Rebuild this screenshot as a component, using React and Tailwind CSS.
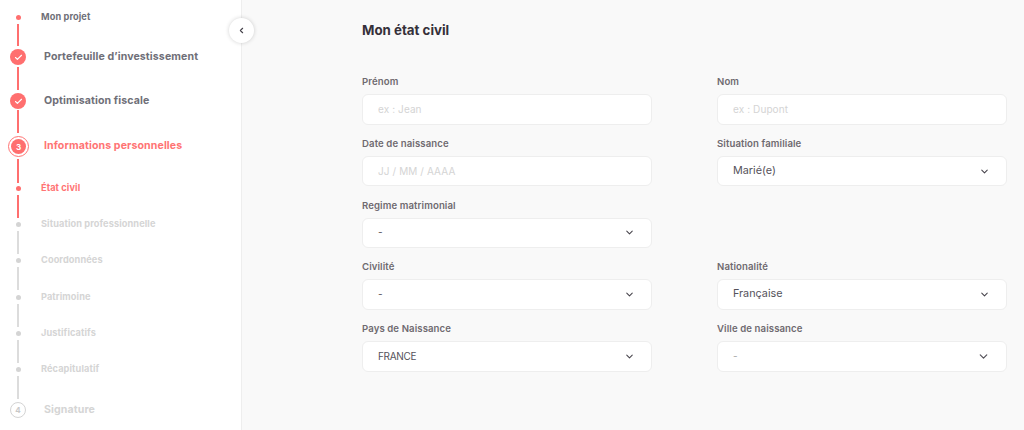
import { Check, ChevronDown, ChevronLeft } from 'lucide-react';

const FONT = "font-['Inter','Open_Sans',sans-serif]";

function Line({ on, top, bottom }) {
  return (
    <div
      className={`ml-[17px] w-[2px] ${on ? 'bg-[#ff6f6f]' : 'bg-[#dcdcdc]'}`}
      style={{ marginTop: top, height: bottom - top }}
    />
  );
}

function SubStep({ label, state = 'off' }) {
  const colors = {
    done: 'text-[#6f6f78]',
    active: 'text-[#ff7474]',
    off: 'text-[#d5d5d5]',
  };
  return (
    <div className="flex items-center h-[5px] ml-[16px]">
      <span className={`w-[5px] h-[5px] rounded-full ${state === 'off' ? 'bg-[#d4d4d4]' : 'bg-[#ff6f6f]'}`} />
      <span className={`ml-[20px] pb-[1px] text-[9.2px] font-bold whitespace-nowrap tracking-[0.1px] ${colors[state]}`}>{label}</span>
    </div>
  );
}

function Step({ label, state, num }) {
  const text = 'pb-[1px] text-[10.6px] font-bold whitespace-nowrap tracking-[0.1px]';
  if (state === 'active') {
    return (
      <div className="flex items-center h-[21px] ml-[8px]">
        <span className="w-[21px] h-[21px] rounded-full border border-[#ff7474] flex items-center justify-center">
          <span className="w-[15px] h-[15px] rounded-full bg-[#ff6f6f] text-white text-[8px] font-bold flex items-center justify-center">{num}</span>
        </span>
        <span className={`ml-[15px] text-[#ff7474] ${text}`}>{label}</span>
      </div>
    );
  }
  if (state === 'off') {
    return (
      <div className="flex items-center h-[16px] ml-[10px]">
        <span className="w-[16px] h-[16px] rounded-full border border-[#d4d4d4] text-[#c8c8c8] text-[8px] font-bold flex items-center justify-center">{num}</span>
        <span className={`ml-[18px] text-[#d5d5d5] ${text}`}>{label}</span>
      </div>
    );
  }
  return (
    <div className="flex items-center h-[16px] ml-[10px]">
      <span className="w-[16px] h-[16px] rounded-full bg-[#ff6f6f] flex items-center justify-center">
        <Check className="w-[9px] h-[9px] text-white" strokeWidth={3} />
      </span>
      <span className={`ml-[18px] text-[#6f6f78] ${text}`}>{label}</span>
    </div>
  );
}

function Field({ label, placeholder, value, select, muted, small, bigChevron }) {
  return (
    <div>
      <label className="block h-[16px] leading-[18px] mb-[5px] text-[9.6px] font-semibold text-[#6f6a70] tracking-[0.1px]">{label}</label>
      {select ? (
        <div className="h-[30.5px] bg-white rounded-[6px] border border-[#eeeeee] flex items-center justify-between pl-[15px] pr-[16px]">
          <span className={`${small ? 'text-[10px] tracking-[-0.3px]' : 'text-[10.8px]'} ${muted ? 'text-[#a8a8a8]' : 'text-[#55525a]'}`}>{value}</span>
          <ChevronDown className={bigChevron ? 'w-[13px] h-[13px] text-[#55525a]' : 'w-[11px] h-[11px] text-[#45424a]'} strokeWidth={2.25} />
        </div>
      ) : (
        <input
          placeholder={placeholder}
          className="block w-full h-[30.5px] bg-white rounded-[6px] border border-[#eeeeee] pl-[15px] text-[10px] tracking-[0.1px] placeholder:text-[#d4d4d4] outline-none"
        />
      )}
    </div>
  );
}

export default function App() {
  return (
    <div className={`relative flex w-[1024px] h-[430px] overflow-hidden bg-[#f9f9f9] ${FONT}`}>
      <aside className="w-[242px] h-full bg-white border-r border-[#eeeeee] pt-[15px] shrink-0">
        <SubStep label="Mon projet" state="done" />
        <Line on top={4} bottom={26} />
        <div className="mt-[3px]"><Step label="Portefeuille d’investissement" state="done" /></div>
        <Line on top={2} bottom={25} />
        <div className="mt-[3px]"><Step label="Optimisation fiscale" state="done" /></div>
        <Line on top={1} bottom={24} />
        <div className="mt-[3px]"><Step label="Informations personnelles" state="active" num="3" /></div>
        <Line on top={2} bottom={26} />
        <div className="mt-[3px]"><SubStep label="État civil" state="active" /></div>
        <Line on top={4} bottom={27} />
        <div className="mt-[4px]"><SubStep label="Situation professionnelle" /></div>
        <Line top={4} bottom={27} />
        <div className="mt-[4px]"><SubStep label="Coordonnées" /></div>
        <Line top={4} bottom={27} />
        <div className="mt-[5px]"><SubStep label="Patrimoine" /></div>
        <Line top={4} bottom={27} />
        <div className="mt-[4px]"><SubStep label="Justificatifs" /></div>
        <Line top={4} bottom={27} />
        <div className="mt-[4px]"><SubStep label="Récapitulatif" /></div>
        <Line top={4} bottom={27} />
        <div className="mt-[3px]"><Step label="Signature" state="off" num="4" /></div>
      </aside>

      {/* Collapse button */}
      <button className="absolute left-[229px] top-[18px] w-[25px] h-[25px] rounded-full bg-white shadow-[0_0_4px_rgba(0,0,0,0.18)] flex items-center justify-center">
        <ChevronLeft className="w-[9px] h-[9px] text-[#45424a]" strokeWidth={3} />
      </button>

      <main className="flex-1 pl-[120px] pr-[17px] pt-[20px]">
        <h1 className="h-[20px] leading-[20px] text-[13.3px] font-bold text-[#35303a]">Mon état civil</h1>
        <div className="grid grid-cols-2 gap-x-[65px] gap-y-[10.25px] mt-[33px]">
          <Field label="Prénom" placeholder="ex : Jean" />
          <Field label="Nom" placeholder="ex : Dupont" />
          <Field label="Date de naissance" placeholder="JJ / MM / AAAA" />
          <Field label="Situation familiale" select value="Marié(e)" />
          <Field label="Regime matrimonial" select small value="-" />
          <div />
          <Field label="Civilité" select small value="-" />
          <Field label="Nationalité" select value="Française" />
          <Field label="Pays de Naissance" select small value="FRANCE" />
          <Field label="Ville de naissance" select small bigChevron value="-" muted />
        </div>
      </main>
    </div>
  );
}
